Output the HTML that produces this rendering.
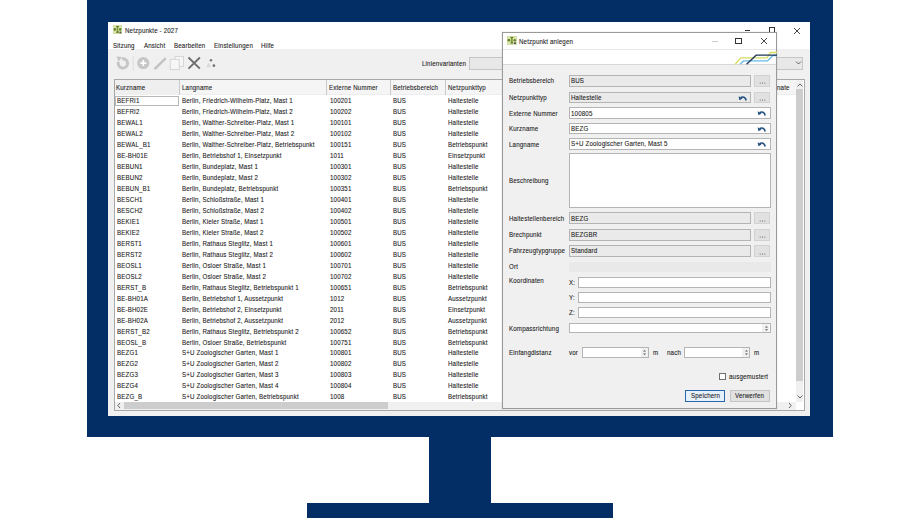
<!DOCTYPE html>
<html><head><meta charset="utf-8"><style>
html,body{-webkit-font-smoothing:antialiased;margin:0;padding:0;background:#fff;width:920px;height:518px;overflow:hidden;position:relative}
.t{position:absolute;font-family:"Liberation Sans",sans-serif;font-size:7.8px;line-height:8px;letter-spacing:0.2px;transform:scaleX(0.79);transform-origin:0 0;-webkit-text-stroke:0.12px #444;white-space:nowrap;color:#151515}
</style></head><body>
<div style="position:absolute;left:87px;top:0px;width:746px;height:437.4px;background:#032e65"></div>
<div style="position:absolute;left:429px;top:437px;width:62px;height:66px;background:#032e65"></div>
<div style="position:absolute;left:307px;top:503px;width:306px;height:15px;background:#032e65"></div>
<div style="position:absolute;left:108px;top:22px;width:702px;height:394px;background:#f0f0f0"></div>
<div style="position:absolute;left:108px;top:22px;width:702px;height:27.200000000000003px;background:#ffffff"></div>
<svg style="position:absolute;left:113px;top:25.2px" width="9" height="9" viewBox="0 0 10 9" preserveAspectRatio="none"><rect x="0" y="0" width="10" height="9" fill="#dbe7ad"/><rect x="0" y="0" width="10" height="9" fill="none" stroke="#c6cf9a" stroke-width="0.6"/><rect x="4.1" y="1.2" width="1.8" height="6.4" fill="#7f9a3a"/><rect x="3.6" y="1.0" width="2.8" height="1.2" fill="#5b7424"/><rect x="3.6" y="6.6" width="2.8" height="1.2" fill="#5b7424"/><circle cx="2" cy="4.4" r="1.4" fill="#66802a"/><circle cx="8" cy="4.4" r="1.3" fill="#66802a"/><rect x="7.2" y="6.6" width="2" height="1.8" fill="#555"/></svg>
<div class="t" style="left:125px;top:26.80px;">Netzpunkte - 2027</div>
<div style="position:absolute;left:744.5px;top:29.5px;width:5.5px;height:0.8000000000000007px;background:#333"></div>
<div style="position:absolute;left:769px;top:27.4px;width:6px;height:5.600000000000001px;border:1px solid #333;box-sizing:border-box"></div>
<svg style="position:absolute;left:793px;top:26.5px" width="8" height="8"><path d="M1 1L7 7M7 1L1 7" stroke="#333" stroke-width="0.9"/></svg>
<div class="t" style="left:113.3px;top:41.70px;">Sitzung</div>
<div class="t" style="left:143.7px;top:41.70px;">Ansicht</div>
<div class="t" style="left:174px;top:41.70px;">Bearbeiten</div>
<div class="t" style="left:213.7px;top:41.70px;">Einstellungen</div>
<div class="t" style="left:261px;top:41.70px;">Hilfe</div>
<svg style="position:absolute;left:108px;top:50px" width="120" height="28">
<path d="M14.08 8.77A4.7 4.7 0 1 1 10.48 11.79" fill="none" stroke="#c6c6c6" stroke-width="2.9"/>
<path d="M8.4 6.4L14.2 6.9L10.6 11.4Z" fill="#c6c6c6"/>
<line x1="25.2" y1="6" x2="25.2" y2="21" stroke="#dcdcdc" stroke-width="0.8"/>
<circle cx="35.3" cy="13.1" r="6.1" fill="#c6c6c6"/>
<path d="M35.3 10.1V16.1M32.3 13.1H38.3" stroke="#fff" stroke-width="1.7"/>
<path d="M46.6 19.2L57.8 8.2" stroke="#c2c2c2" stroke-width="2.4"/>
<rect x="67.1" y="6.4" width="8.3" height="10.2" fill="#f6f6f6" stroke="#d2d2d2" stroke-width="0.9"/>
<rect x="62.2" y="9.4" width="9" height="10.2" fill="#f6f6f6" stroke="#d2d2d2" stroke-width="0.9"/>
<path d="M80.5 7.5L91.9 18.6M91.9 7.5L80.5 18.6" stroke="#6c6c6c" stroke-width="1.8"/>
<circle cx="103" cy="10.2" r="1.3" fill="#7a7a7a"/><circle cx="105.9" cy="15.7" r="1.4" fill="#777"/><path d="M99.2 16.6L100.6 13.6L102 16.6Z" fill="none" stroke="#c8c8c8" stroke-width="0.7"/>
</svg>
<div class="t" style="left:422px;top:59.90px;">Linienvarianten</div>
<div style="position:absolute;left:469.3px;top:57.4px;width:334.2px;height:12.199999999999996px;background:#e8e8e8;border:1px solid #c6c6c6;box-sizing:border-box"></div>
<svg style="position:absolute;left:795px;top:60px" width="7" height="6"><path d="M1 1.5L3.5 4L6 1.5" stroke="#444" stroke-width="0.8" fill="none"/></svg>
<div style="position:absolute;left:113.5px;top:79.3px;width:691.0px;height:331.7px;background:#fff;border:1px solid #a8a8a8;box-sizing:border-box"></div>
<div style="position:absolute;left:114.5px;top:80.3px;width:681.0px;height:14.700000000000003px;background:#f5f5f5;border-bottom:1px solid #ededed;box-sizing:border-box"></div>
<div style="position:absolute;left:114.5px;top:80.3px;width:64.5px;height:14.700000000000003px;background:#efefef"></div>
<div style="position:absolute;left:179px;top:80.3px;width:1px;height:14.700000000000003px;background:#c9c9c9"></div>
<div style="position:absolute;left:326.3px;top:80.3px;width:1.0px;height:14.700000000000003px;background:#c9c9c9"></div>
<div style="position:absolute;left:390.4px;top:80.3px;width:1.0px;height:14.700000000000003px;background:#c9c9c9"></div>
<div style="position:absolute;left:445.2px;top:80.3px;width:1.0px;height:14.700000000000003px;background:#c9c9c9"></div>
<div class="t" style="left:116.3px;top:84.30px;">Kurzname</div>
<div class="t" style="left:181.5px;top:84.30px;">Langname</div>
<div class="t" style="left:329.2px;top:84.30px;">Externe Nummer</div>
<div class="t" style="left:392.8px;top:84.30px;">Betriebsbereich</div>
<div class="t" style="left:447.6px;top:84.30px;">Netzpunkttyp</div>
<div class="t" style="left:777.4px;top:84.30px;">nate</div>
<div style="position:absolute;left:115.3px;top:95.6px;width:63.3px;height:10.0px;border:1px solid #b8b8b8;box-sizing:border-box;background:#fff"></div>
<div class="t" style="left:116.8px;top:97.40px;">BEFRI1</div>
<div class="t" style="left:181.8px;top:97.40px;">Berlin, Friedrich-Wilhelm-Platz, Mast 1</div>
<div class="t" style="left:329.9px;top:97.40px;">100201</div>
<div class="t" style="left:393.3px;top:97.40px;">BUS</div>
<div class="t" style="left:447.9px;top:97.40px;">Haltestelle</div>
<div class="t" style="left:116.8px;top:108.36px;">BEFRI2</div>
<div class="t" style="left:181.8px;top:108.36px;">Berlin, Friedrich-Wilhelm-Platz, Mast 2</div>
<div class="t" style="left:329.9px;top:108.36px;">100202</div>
<div class="t" style="left:393.3px;top:108.36px;">BUS</div>
<div class="t" style="left:447.9px;top:108.36px;">Haltestelle</div>
<div class="t" style="left:116.8px;top:119.32px;">BEWAL1</div>
<div class="t" style="left:181.8px;top:119.32px;">Berlin, Walther-Schreiber-Platz, Mast 1</div>
<div class="t" style="left:329.9px;top:119.32px;">100101</div>
<div class="t" style="left:393.3px;top:119.32px;">BUS</div>
<div class="t" style="left:447.9px;top:119.32px;">Haltestelle</div>
<div class="t" style="left:116.8px;top:130.28px;">BEWAL2</div>
<div class="t" style="left:181.8px;top:130.28px;">Berlin, Walther-Schreiber-Platz, Mast 2</div>
<div class="t" style="left:329.9px;top:130.28px;">100102</div>
<div class="t" style="left:393.3px;top:130.28px;">BUS</div>
<div class="t" style="left:447.9px;top:130.28px;">Haltestelle</div>
<div class="t" style="left:116.8px;top:141.24px;">BEWAL_B1</div>
<div class="t" style="left:181.8px;top:141.24px;">Berlin, Walther-Schreiber-Platz, Betriebspunkt</div>
<div class="t" style="left:329.9px;top:141.24px;">100151</div>
<div class="t" style="left:393.3px;top:141.24px;">BUS</div>
<div class="t" style="left:447.9px;top:141.24px;">Betriebspunkt</div>
<div class="t" style="left:116.8px;top:152.20px;">BE-BH01E</div>
<div class="t" style="left:181.8px;top:152.20px;">Berlin, Betriebshof 1, Einsetzpunkt</div>
<div class="t" style="left:329.9px;top:152.20px;">1011</div>
<div class="t" style="left:393.3px;top:152.20px;">BUS</div>
<div class="t" style="left:447.9px;top:152.20px;">Einsetzpunkt</div>
<div class="t" style="left:116.8px;top:163.16px;">BEBUN1</div>
<div class="t" style="left:181.8px;top:163.16px;">Berlin, Bundeplatz, Mast 1</div>
<div class="t" style="left:329.9px;top:163.16px;">100301</div>
<div class="t" style="left:393.3px;top:163.16px;">BUS</div>
<div class="t" style="left:447.9px;top:163.16px;">Haltestelle</div>
<div class="t" style="left:116.8px;top:174.12px;">BEBUN2</div>
<div class="t" style="left:181.8px;top:174.12px;">Berlin, Bundeplatz, Mast 2</div>
<div class="t" style="left:329.9px;top:174.12px;">100302</div>
<div class="t" style="left:393.3px;top:174.12px;">BUS</div>
<div class="t" style="left:447.9px;top:174.12px;">Haltestelle</div>
<div class="t" style="left:116.8px;top:185.08px;">BEBUN_B1</div>
<div class="t" style="left:181.8px;top:185.08px;">Berlin, Bundeplatz, Betriebspunkt</div>
<div class="t" style="left:329.9px;top:185.08px;">100351</div>
<div class="t" style="left:393.3px;top:185.08px;">BUS</div>
<div class="t" style="left:447.9px;top:185.08px;">Betriebspunkt</div>
<div class="t" style="left:116.8px;top:196.04px;">BESCH1</div>
<div class="t" style="left:181.8px;top:196.04px;">Berlin, Schloßstraße, Mast 1</div>
<div class="t" style="left:329.9px;top:196.04px;">100401</div>
<div class="t" style="left:393.3px;top:196.04px;">BUS</div>
<div class="t" style="left:447.9px;top:196.04px;">Haltestelle</div>
<div class="t" style="left:116.8px;top:207.00px;">BESCH2</div>
<div class="t" style="left:181.8px;top:207.00px;">Berlin, Schloßstraße, Mast 2</div>
<div class="t" style="left:329.9px;top:207.00px;">100402</div>
<div class="t" style="left:393.3px;top:207.00px;">BUS</div>
<div class="t" style="left:447.9px;top:207.00px;">Haltestelle</div>
<div class="t" style="left:116.8px;top:217.96px;">BEKIE1</div>
<div class="t" style="left:181.8px;top:217.96px;">Berlin, Kieler Straße, Mast 1</div>
<div class="t" style="left:329.9px;top:217.96px;">100501</div>
<div class="t" style="left:393.3px;top:217.96px;">BUS</div>
<div class="t" style="left:447.9px;top:217.96px;">Haltestelle</div>
<div class="t" style="left:116.8px;top:228.92px;">BEKIE2</div>
<div class="t" style="left:181.8px;top:228.92px;">Berlin, Kieler Straße, Mast 2</div>
<div class="t" style="left:329.9px;top:228.92px;">100502</div>
<div class="t" style="left:393.3px;top:228.92px;">BUS</div>
<div class="t" style="left:447.9px;top:228.92px;">Haltestelle</div>
<div class="t" style="left:116.8px;top:239.88px;">BERST1</div>
<div class="t" style="left:181.8px;top:239.88px;">Berlin, Rathaus Steglitz, Mast 1</div>
<div class="t" style="left:329.9px;top:239.88px;">100601</div>
<div class="t" style="left:393.3px;top:239.88px;">BUS</div>
<div class="t" style="left:447.9px;top:239.88px;">Haltestelle</div>
<div class="t" style="left:116.8px;top:250.84px;">BERST2</div>
<div class="t" style="left:181.8px;top:250.84px;">Berlin, Rathaus Steglitz, Mast 2</div>
<div class="t" style="left:329.9px;top:250.84px;">100602</div>
<div class="t" style="left:393.3px;top:250.84px;">BUS</div>
<div class="t" style="left:447.9px;top:250.84px;">Haltestelle</div>
<div class="t" style="left:116.8px;top:261.80px;">BEOSL1</div>
<div class="t" style="left:181.8px;top:261.80px;">Berlin, Osloer Straße, Mast 1</div>
<div class="t" style="left:329.9px;top:261.80px;">100701</div>
<div class="t" style="left:393.3px;top:261.80px;">BUS</div>
<div class="t" style="left:447.9px;top:261.80px;">Haltestelle</div>
<div class="t" style="left:116.8px;top:272.76px;">BEOSL2</div>
<div class="t" style="left:181.8px;top:272.76px;">Berlin, Osloer Straße, Mast 2</div>
<div class="t" style="left:329.9px;top:272.76px;">100702</div>
<div class="t" style="left:393.3px;top:272.76px;">BUS</div>
<div class="t" style="left:447.9px;top:272.76px;">Haltestelle</div>
<div class="t" style="left:116.8px;top:283.72px;">BERST_B</div>
<div class="t" style="left:181.8px;top:283.72px;">Berlin, Rathaus Steglitz, Betriebspunkt 1</div>
<div class="t" style="left:329.9px;top:283.72px;">100651</div>
<div class="t" style="left:393.3px;top:283.72px;">BUS</div>
<div class="t" style="left:447.9px;top:283.72px;">Betriebspunkt</div>
<div class="t" style="left:116.8px;top:294.68px;">BE-BH01A</div>
<div class="t" style="left:181.8px;top:294.68px;">Berlin, Betriebshof 1, Aussetzpunkt</div>
<div class="t" style="left:329.9px;top:294.68px;">1012</div>
<div class="t" style="left:393.3px;top:294.68px;">BUS</div>
<div class="t" style="left:447.9px;top:294.68px;">Aussetzpunkt</div>
<div class="t" style="left:116.8px;top:305.64px;">BE-BH02E</div>
<div class="t" style="left:181.8px;top:305.64px;">Berlin, Betriebshof 2, Einsetzpunkt</div>
<div class="t" style="left:329.9px;top:305.64px;">2011</div>
<div class="t" style="left:393.3px;top:305.64px;">BUS</div>
<div class="t" style="left:447.9px;top:305.64px;">Einsetzpunkt</div>
<div class="t" style="left:116.8px;top:316.60px;">BE-BH02A</div>
<div class="t" style="left:181.8px;top:316.60px;">Berlin, Betriebshof 2, Aussetzpunkt</div>
<div class="t" style="left:329.9px;top:316.60px;">2012</div>
<div class="t" style="left:393.3px;top:316.60px;">BUS</div>
<div class="t" style="left:447.9px;top:316.60px;">Aussetzpunkt</div>
<div class="t" style="left:116.8px;top:327.56px;">BERST_B2</div>
<div class="t" style="left:181.8px;top:327.56px;">Berlin, Rathaus Steglitz, Betriebspunkt 2</div>
<div class="t" style="left:329.9px;top:327.56px;">100652</div>
<div class="t" style="left:393.3px;top:327.56px;">BUS</div>
<div class="t" style="left:447.9px;top:327.56px;">Betriebspunkt</div>
<div class="t" style="left:116.8px;top:338.52px;">BEOSL_B</div>
<div class="t" style="left:181.8px;top:338.52px;">Berlin, Osloer Straße, Betriebspunkt</div>
<div class="t" style="left:329.9px;top:338.52px;">100751</div>
<div class="t" style="left:393.3px;top:338.52px;">BUS</div>
<div class="t" style="left:447.9px;top:338.52px;">Betriebspunkt</div>
<div class="t" style="left:116.8px;top:349.48px;">BEZG1</div>
<div class="t" style="left:181.8px;top:349.48px;">S+U Zoologischer Garten, Mast 1</div>
<div class="t" style="left:329.9px;top:349.48px;">100801</div>
<div class="t" style="left:393.3px;top:349.48px;">BUS</div>
<div class="t" style="left:447.9px;top:349.48px;">Haltestelle</div>
<div class="t" style="left:116.8px;top:360.44px;">BEZG2</div>
<div class="t" style="left:181.8px;top:360.44px;">S+U Zoologischer Garten, Mast 2</div>
<div class="t" style="left:329.9px;top:360.44px;">100802</div>
<div class="t" style="left:393.3px;top:360.44px;">BUS</div>
<div class="t" style="left:447.9px;top:360.44px;">Haltestelle</div>
<div class="t" style="left:116.8px;top:371.40px;">BEZG3</div>
<div class="t" style="left:181.8px;top:371.40px;">S+U Zoologischer Garten, Mast 3</div>
<div class="t" style="left:329.9px;top:371.40px;">100803</div>
<div class="t" style="left:393.3px;top:371.40px;">BUS</div>
<div class="t" style="left:447.9px;top:371.40px;">Haltestelle</div>
<div class="t" style="left:116.8px;top:382.36px;">BEZG4</div>
<div class="t" style="left:181.8px;top:382.36px;">S+U Zoologischer Garten, Mast 4</div>
<div class="t" style="left:329.9px;top:382.36px;">100804</div>
<div class="t" style="left:393.3px;top:382.36px;">BUS</div>
<div class="t" style="left:447.9px;top:382.36px;">Haltestelle</div>
<div class="t" style="left:116.8px;top:393.32px;">BEZG_B</div>
<div class="t" style="left:181.8px;top:393.32px;">S+U Zoologischer Garten, Betriebspunkt</div>
<div class="t" style="left:329.9px;top:393.32px;">1008</div>
<div class="t" style="left:393.3px;top:393.32px;">BUS</div>
<div class="t" style="left:447.9px;top:393.32px;">Betriebspunkt</div>
<div style="position:absolute;left:795.6px;top:80.3px;width:7.899999999999977px;height:321.4px;background:#f0f0f0"></div>
<div style="position:absolute;left:795.9px;top:89px;width:7.300000000000068px;height:292px;background:#cdcdcd"></div>
<svg style="position:absolute;left:796px;top:82px" width="8" height="6"><path d="M1.5 4.5L4 2L6.5 4.5" stroke="#505050" stroke-width="0.9" fill="none"/></svg>
<svg style="position:absolute;left:796px;top:394px" width="8" height="6"><path d="M1.5 1.5L4 4L6.5 1.5" stroke="#505050" stroke-width="0.9" fill="none"/></svg>
<div style="position:absolute;left:114.5px;top:402px;width:681.1px;height:8px;background:#f0f0f0"></div>
<div style="position:absolute;left:123.5px;top:402.3px;width:264.0px;height:7.199999999999989px;background:#cdcdcd"></div>
<svg style="position:absolute;left:116px;top:402px" width="6" height="7"><path d="M4 1L1.8 3.5L4 6" stroke="#505050" stroke-width="0.9" fill="none"/></svg>
<svg style="position:absolute;left:787px;top:402px" width="6" height="7"><path d="M2 1L4.2 3.5L2 6" stroke="#505050" stroke-width="0.9" fill="none"/></svg>
<div style="position:absolute;left:501.4px;top:31.4px;width:276.20000000000005px;height:378.40000000000003px;background:rgba(0,0,0,0.04)"></div>
<div style="position:absolute;left:502.4px;top:32.4px;width:274.20000000000005px;height:376.40000000000003px;background:#f0f0f0;border:1px solid #9a9a9a;box-sizing:border-box"></div>
<div style="position:absolute;left:503.4px;top:33.4px;width:272.20000000000005px;height:31.1px;background:#fff"></div>
<div style="position:absolute;left:503.4px;top:49.2px;width:272.20000000000005px;height:0.6999999999999957px;background:#e6e6e6"></div>
<div style="position:absolute;left:503.4px;top:64.3px;width:272.20000000000005px;height:0.7999999999999972px;background:#d8d8d8"></div>
<svg style="position:absolute;left:507px;top:36.2px" width="9.7" height="8.6" viewBox="0 0 10 9" preserveAspectRatio="none"><rect x="0" y="0" width="10" height="9" fill="#dbe7ad"/><rect x="0" y="0" width="10" height="9" fill="none" stroke="#c6cf9a" stroke-width="0.6"/><rect x="4.1" y="1.2" width="1.8" height="6.4" fill="#7f9a3a"/><rect x="3.6" y="1.0" width="2.8" height="1.2" fill="#5b7424"/><rect x="3.6" y="6.6" width="2.8" height="1.2" fill="#5b7424"/><circle cx="2" cy="4.4" r="1.4" fill="#66802a"/><circle cx="8" cy="4.4" r="1.3" fill="#66802a"/><rect x="7.2" y="6.6" width="2" height="1.8" fill="#555"/></svg>
<div class="t" style="left:519px;top:38.00px;">Netzpunkt anlegen</div>
<div style="position:absolute;left:712px;top:41px;width:6px;height:0.6000000000000014px;background:#ccc"></div>
<div style="position:absolute;left:735.2px;top:38.1px;width:6.399999999999977px;height:5.699999999999996px;border:1px solid #333;box-sizing:border-box"></div>
<svg style="position:absolute;left:759.6px;top:37px" width="8" height="8"><path d="M1 1L7 7M7 1L1 7" stroke="#333" stroke-width="0.9"/></svg>
<svg style="position:absolute;left:725px;top:45px" width="52" height="20">
<path d="M10.2 19.2L15.9 12.9H41.9L45.5 7.5H52" stroke="#d6dc62" stroke-width="1.3" fill="none"/>
<path d="M15 19.2L18.6 15.9H42.5L47.9 10.5H52" stroke="#66b9e6" stroke-width="1.3" fill="none"/>
<path d="M21.6 19.2L31.1 10.2H52" stroke="#1f3558" stroke-width="1.3" fill="none"/>
</svg>
<div class="t" style="left:509.3px;top:77.40px;">Betriebsbereich</div>
<div class="t" style="left:509.3px;top:93.80px;">Netzpunkttyp</div>
<div class="t" style="left:509.3px;top:109.60px;">Externe Nummer</div>
<div class="t" style="left:509.3px;top:125.00px;">Kurzname</div>
<div class="t" style="left:509.3px;top:140.50px;">Langname</div>
<div class="t" style="left:509.3px;top:177.30px;">Beschreibung</div>
<div class="t" style="left:509.3px;top:214.70px;">Haltestellenbereich</div>
<div class="t" style="left:509.3px;top:230.90px;">Brechpunkt</div>
<div class="t" style="left:509.3px;top:247.40px;">Fahrzeugtypgruppe</div>
<div class="t" style="left:509.3px;top:263.30px;">Ort</div>
<div class="t" style="left:509.3px;top:277.20px;">Koordinaten</div>
<div class="t" style="left:509.3px;top:324.60px;">Kompassrichtung</div>
<div class="t" style="left:509.3px;top:348.60px;">Einfangdistanz</div>
<div style="position:absolute;left:569px;top:75px;width:181.5px;height:11.700000000000003px;background:#eaeaea;border:1px solid #b4b4b4;box-sizing:border-box"></div>
<div class="t" style="left:570.8px;top:77.25px;">BUS</div>
<div style="position:absolute;left:754.4px;top:75px;width:15.200000000000045px;height:11.700000000000003px;background:#e1e1e1;border:1px solid #d2d2d2;box-sizing:border-box"></div>
<svg style="position:absolute;left:758.5px;top:82.20px" width="7" height="2"><circle cx="1.2" cy="1" r="0.55" fill="#555"/><circle cx="3.5" cy="1" r="0.55" fill="#555"/><circle cx="5.8" cy="1" r="0.55" fill="#555"/></svg>
<div style="position:absolute;left:569px;top:91.6px;width:181.5px;height:11.800000000000011px;background:#eaeaea;border:1px solid #b4b4b4;box-sizing:border-box"></div>
<div class="t" style="left:570.8px;top:93.90px;">Haltestelle</div>
<div style="position:absolute;left:754.4px;top:91.6px;width:15.200000000000045px;height:11.800000000000011px;background:#e1e1e1;border:1px solid #d2d2d2;box-sizing:border-box"></div>
<svg style="position:absolute;left:758.5px;top:98.90px" width="7" height="2"><circle cx="1.2" cy="1" r="0.55" fill="#555"/><circle cx="3.5" cy="1" r="0.55" fill="#555"/><circle cx="5.8" cy="1" r="0.55" fill="#555"/></svg>
<svg style="position:absolute;left:737.8px;top:94.50px" width="9" height="6"><path d="M8.2 5.5C7.6 2.3 4.8 1.2 2.6 2.6" stroke="#24507f" stroke-width="1.6" fill="none"/><path d="M0.6 1.2L1.4 5.2L4.6 3.6Z" fill="#24507f"/></svg>
<div style="position:absolute;left:569px;top:107.4px;width:201.5px;height:11.599999999999994px;background:#fff;border:1px solid #b4b4b4;box-sizing:border-box"></div>
<div class="t" style="left:570.8px;top:109.60px;">100805</div>
<svg style="position:absolute;left:757.4px;top:110.20px" width="9" height="6"><path d="M8.2 5.5C7.6 2.3 4.8 1.2 2.6 2.6" stroke="#24507f" stroke-width="1.6" fill="none"/><path d="M0.6 1.2L1.4 5.2L4.6 3.6Z" fill="#24507f"/></svg>
<div style="position:absolute;left:569px;top:122.7px;width:201.5px;height:11.600000000000009px;background:#fff;border:1px solid #b4b4b4;box-sizing:border-box"></div>
<div class="t" style="left:570.8px;top:124.90px;">BEZG</div>
<svg style="position:absolute;left:757.4px;top:125.50px" width="9" height="6"><path d="M8.2 5.5C7.6 2.3 4.8 1.2 2.6 2.6" stroke="#24507f" stroke-width="1.6" fill="none"/><path d="M0.6 1.2L1.4 5.2L4.6 3.6Z" fill="#24507f"/></svg>
<div style="position:absolute;left:569px;top:138.2px;width:201.5px;height:11.600000000000023px;background:#fff;border:1px solid #b4b4b4;box-sizing:border-box"></div>
<div class="t" style="left:570.8px;top:140.40px;">S+U Zoologischer Garten, Mast 5</div>
<svg style="position:absolute;left:757.4px;top:141.00px" width="9" height="6"><path d="M8.2 5.5C7.6 2.3 4.8 1.2 2.6 2.6" stroke="#24507f" stroke-width="1.6" fill="none"/><path d="M0.6 1.2L1.4 5.2L4.6 3.6Z" fill="#24507f"/></svg>
<div style="position:absolute;left:569px;top:153.2px;width:201.5px;height:54.400000000000006px;background:#fff;border:1px solid #b4b4b4;box-sizing:border-box"></div>
<div style="position:absolute;left:569px;top:212.4px;width:181.5px;height:11.599999999999994px;background:#eaeaea;border:1px solid #b4b4b4;box-sizing:border-box"></div>
<div class="t" style="left:570.8px;top:214.60px;">BEZG</div>
<div style="position:absolute;left:754.4px;top:212.4px;width:15.200000000000045px;height:11.599999999999994px;background:#e1e1e1;border:1px solid #d2d2d2;box-sizing:border-box"></div>
<svg style="position:absolute;left:758.5px;top:219.50px" width="7" height="2"><circle cx="1.2" cy="1" r="0.55" fill="#555"/><circle cx="3.5" cy="1" r="0.55" fill="#555"/><circle cx="5.8" cy="1" r="0.55" fill="#555"/></svg>
<div style="position:absolute;left:569px;top:229.3px;width:181.5px;height:11.299999999999983px;background:#eaeaea;border:1px solid #b4b4b4;box-sizing:border-box"></div>
<div class="t" style="left:570.8px;top:231.35px;">BEZGBR</div>
<div style="position:absolute;left:754.4px;top:229.3px;width:15.200000000000045px;height:11.299999999999983px;background:#e1e1e1;border:1px solid #d2d2d2;box-sizing:border-box"></div>
<svg style="position:absolute;left:758.5px;top:236.10px" width="7" height="2"><circle cx="1.2" cy="1" r="0.55" fill="#555"/><circle cx="3.5" cy="1" r="0.55" fill="#555"/><circle cx="5.8" cy="1" r="0.55" fill="#555"/></svg>
<div style="position:absolute;left:569px;top:244.8px;width:181.5px;height:12.199999999999989px;background:#eaeaea;border:1px solid #b4b4b4;box-sizing:border-box"></div>
<div class="t" style="left:570.8px;top:247.30px;">Standard</div>
<div style="position:absolute;left:754.4px;top:244.8px;width:15.200000000000045px;height:12.199999999999989px;background:#e1e1e1;border:1px solid #d2d2d2;box-sizing:border-box"></div>
<svg style="position:absolute;left:758.5px;top:252.50px" width="7" height="2"><circle cx="1.2" cy="1" r="0.55" fill="#555"/><circle cx="3.5" cy="1" r="0.55" fill="#555"/><circle cx="5.8" cy="1" r="0.55" fill="#555"/></svg>
<div style="position:absolute;left:569px;top:261.7px;width:201.5px;height:10.300000000000011px;background:#e9e9e9"></div>
<div class="t" style="left:569.4px;top:278.65px;">X:</div>
<div style="position:absolute;left:577.5px;top:276.8px;width:193.0px;height:11.099999999999966px;background:#fff;border:1px solid #b4b4b4;box-sizing:border-box"></div>
<div class="t" style="left:569.4px;top:293.90px;">Y:</div>
<div style="position:absolute;left:577.5px;top:291.8px;width:193.0px;height:11.599999999999966px;background:#fff;border:1px solid #b4b4b4;box-sizing:border-box"></div>
<div class="t" style="left:569.4px;top:309.15px;">Z:</div>
<div style="position:absolute;left:577.5px;top:307.3px;width:193.0px;height:11.099999999999966px;background:#fff;border:1px solid #b4b4b4;box-sizing:border-box"></div>
<div style="position:absolute;left:569px;top:322.7px;width:201.5px;height:10.800000000000011px;background:#fff;border:1px solid #b4b4b4;box-sizing:border-box"></div>
<div style="position:absolute;left:762.3px;top:323.7px;width:7.2000000000000455px;height:8.800000000000011px;background:#f0f0f0"></div>
<svg style="position:absolute;left:762.50px;top:323.70px" width="7" height="8.80"><path d="M2 3.6L3.5 2L5 3.6Z M2 5.20L3.5 6.80L5 5.20Z" fill="#555"/></svg>
<div class="t" style="left:568.9px;top:348.60px;">vor</div>
<div style="position:absolute;left:581.5px;top:346.5px;width:67.29999999999995px;height:11.100000000000023px;background:#fff;border:1px solid #b4b4b4;box-sizing:border-box"></div>
<div style="position:absolute;left:640.5999999999999px;top:347.5px;width:7.2000000000000455px;height:9.100000000000023px;background:#f0f0f0"></div>
<svg style="position:absolute;left:640.80px;top:347.50px" width="7" height="9.10"><path d="M2 3.6L3.5 2L5 3.6Z M2 5.50L3.5 7.10L5 5.50Z" fill="#555"/></svg>
<div class="t" style="left:652.5px;top:348.60px;">m</div>
<div class="t" style="left:666.8px;top:348.60px;">nach</div>
<div style="position:absolute;left:684.2px;top:346.5px;width:66.29999999999995px;height:11.100000000000023px;background:#fff;border:1px solid #b4b4b4;box-sizing:border-box"></div>
<div style="position:absolute;left:742.3px;top:347.5px;width:7.2000000000000455px;height:9.100000000000023px;background:#f0f0f0"></div>
<svg style="position:absolute;left:742.50px;top:347.50px" width="7" height="9.10"><path d="M2 3.6L3.5 2L5 3.6Z M2 5.50L3.5 7.10L5 5.50Z" fill="#555"/></svg>
<div class="t" style="left:754.2px;top:348.60px;">m</div>
<div style="position:absolute;left:718.7px;top:373.2px;width:7.099999999999909px;height:6.900000000000034px;background:#fff;border:1px solid #707070;box-sizing:border-box"></div>
<div class="t" style="left:729.2px;top:372.80px;">ausgemustert</div>
<div style="position:absolute;left:685px;top:390px;width:40.299999999999955px;height:11.899999999999977px;background:#e5f1fb;border:1px solid #2a66ad;box-sizing:border-box"></div>
<div class="t" style="left:690.5px;top:392.40px;">Speichern</div>
<div style="position:absolute;left:729.7px;top:390px;width:40.19999999999993px;height:11.899999999999977px;background:#e1e1e1;border:1px solid #c4c4c4;box-sizing:border-box"></div>
<div class="t" style="left:735.2px;top:392.40px;">Verwerfen</div>
</body></html>
